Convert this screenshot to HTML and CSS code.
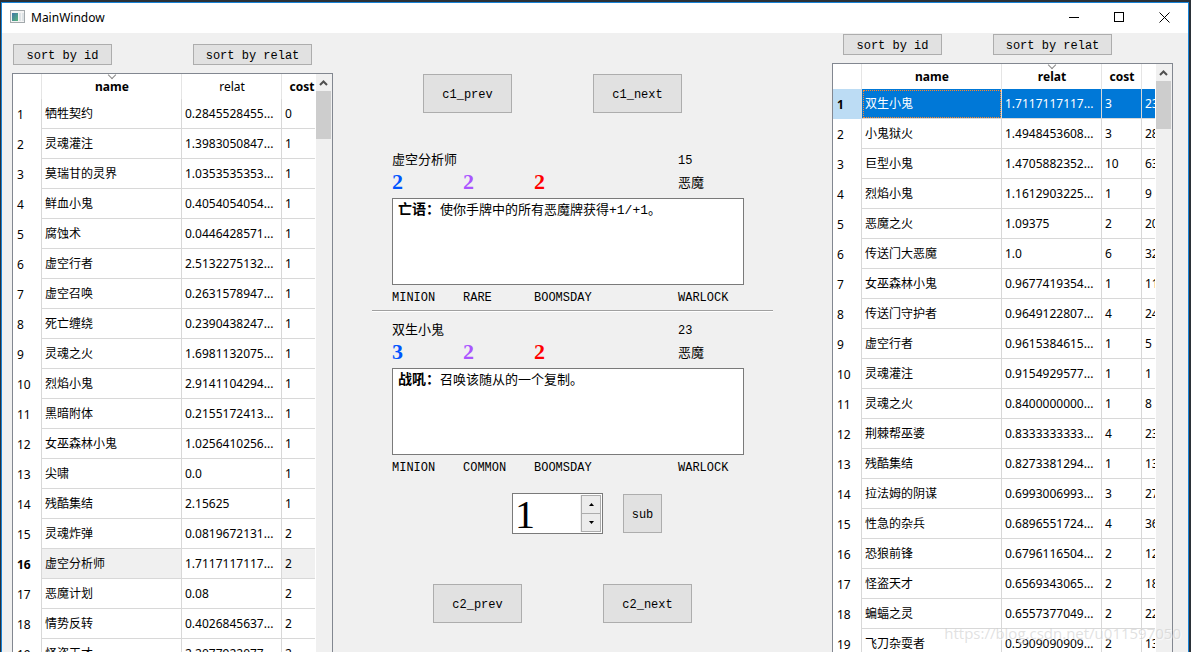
FILE: index.html
```html
<!DOCTYPE html>
<html lang="zh-CN">
<head>
  <meta charset="UTF-8">
  <meta name="viewport" content="width=device-width, initial-scale=1.0">
  <title>MainWindow</title>
  <link rel="stylesheet" href="styles.css">
</head>
<body>
  <div class="window">
    <header class="titlebar">
      <svg class="app-icon" width="16" height="14" viewBox="0 0 16 14">
        <defs>
          <linearGradient id="pane" x1="0" y1="0" x2="1" y2="1">
            <stop offset="0" stop-color="#3f76a8"/>
            <stop offset="1" stop-color="#58b57c"/>
          </linearGradient>
        </defs>
        <rect x="0.5" y="0.5" width="14" height="12" fill="#f4f4f4" stroke="#a3a9ac"/>
        <rect x="2" y="3" width="6" height="8" fill="url(#pane)"/>
        <rect x="9" y="3" width="2" height="8" fill="#dde3e6"/>
        <rect x="12" y="3" width="2" height="8" fill="#dde3e6"/>
      </svg>
      <h1 class="title">MainWindow</h1>
      <div class="controls">
        <button class="ctrl" aria-label="Minimize"><svg width="11" height="11"><path d="M0 5.5H10"/></svg></button>
        <button class="ctrl" aria-label="Maximize"><svg width="11" height="11"><rect x="0.5" y="0.5" width="9" height="9"/></svg></button>
        <button class="ctrl" aria-label="Close"><svg width="11" height="11"><path d="M0.5 0.5L10.5 10.5M10.5 0.5L0.5 10.5"/></svg></button>
      </div>
    </header>

    <main class="content">
      <section class="side side-left">
        <div class="sort-bar">
          <button class="btn btn-id">sort by id</button>
          <button class="btn btn-relat">sort by relat</button>
        </div>
        <div class="table-view">
          <div class="viewport">
            <table>
              <colgroup><col class="c-head"><col class="c-name"><col class="c-relat"><col class="c-cost"></colgroup>
              <thead>
                <tr><th></th><th class="sorted">name</th><th class="plain">relat</th><th>cost</th></tr>
              </thead>
              <tbody>
                <tr><th>1</th><td>牺牲契约</td><td>0.2845528455...</td><td>0</td></tr>
                <tr><th>2</th><td>灵魂灌注</td><td>1.3983050847...</td><td>1</td></tr>
                <tr><th>3</th><td>莫瑞甘的灵界</td><td>1.0353535353...</td><td>1</td></tr>
                <tr><th>4</th><td>鲜血小鬼</td><td>0.4054054054...</td><td>1</td></tr>
                <tr><th>5</th><td>腐蚀术</td><td>0.0446428571...</td><td>1</td></tr>
                <tr><th>6</th><td>虚空行者</td><td>2.5132275132...</td><td>1</td></tr>
                <tr><th>7</th><td>虚空召唤</td><td>0.2631578947...</td><td>1</td></tr>
                <tr><th>8</th><td>死亡缠绕</td><td>0.2390438247...</td><td>1</td></tr>
                <tr><th>9</th><td>灵魂之火</td><td>1.6981132075...</td><td>1</td></tr>
                <tr><th>10</th><td>烈焰小鬼</td><td>2.9141104294...</td><td>1</td></tr>
                <tr><th>11</th><td>黑暗附体</td><td>0.2155172413...</td><td>1</td></tr>
                <tr><th>12</th><td>女巫森林小鬼</td><td>1.0256410256...</td><td>1</td></tr>
                <tr><th>13</th><td>尖啸</td><td>0.0</td><td>1</td></tr>
                <tr><th>14</th><td>残酷集结</td><td>2.15625</td><td>1</td></tr>
                <tr><th>15</th><td>灵魂炸弹</td><td>0.0819672131...</td><td>2</td></tr>
                <tr class="current"><th>16</th><td>虚空分析师</td><td class="focus">1.7117117117...</td><td>2</td></tr>
                <tr><th>17</th><td>恶魔计划</td><td>0.08</td><td>2</td></tr>
                <tr><th>18</th><td>情势反转</td><td>0.4026845637...</td><td>2</td></tr>
                <tr><th>19</th><td>怪盗天才</td><td>2.2077922077...</td><td>2</td></tr>
              </tbody>
            </table>
          </div>
          <div class="scrollbar">
            <svg width="15" height="17"><path d="M4 11L7.500 7.500L11 11"/></svg>
            <div class="thumb"></div>
          </div>
        </div>
      </section>

      <section class="center">
        <div class="pair">
          <button class="btn btn-nav">c1_prev</button>
          <button class="btn btn-nav">c1_next</button>
        </div>

        <article class="card">
          <div class="row row-name">
            <span class="wide">虚空分析师</span><span class="latin">15</span>
          </div>
          <div class="row row-stats">
            <span class="stat cost">2</span><span class="stat attack">2</span><span class="stat health">2</span><span class="race">恶魔</span>
          </div>
          <div class="text"><b>亡语：</b>使你手牌中的所有恶魔牌获得+1/+1。</div>
          <div class="row row-tags">
            <span>MINION</span><span>RARE</span><span>BOOMSDAY</span><span>WARLOCK</span>
          </div>
        </article>
        <hr class="line">
        <article class="card">
          <div class="row row-name">
            <span class="wide">双生小鬼</span><span class="latin">23</span>
          </div>
          <div class="row row-stats">
            <span class="stat cost">3</span><span class="stat attack">2</span><span class="stat health">2</span><span class="race">恶魔</span>
          </div>
          <div class="text"><b>战吼：</b>召唤该随从的一个复制。</div>
          <div class="row row-tags">
            <span>MINION</span><span>COMMON</span><span>BOOMSDAY</span><span>WARLOCK</span>
          </div>
        </article>

        <div class="submit">
          <div class="spin">
            <input type="number" id="count" value="1" aria-label="count">
            <div class="steps">
              <button class="step" aria-label="up"><svg width="5" height="3"><path d="M0 3L2.500 0L5 3Z"/></svg></button>
              <button class="step" aria-label="down"><svg width="5" height="3"><path d="M0 0L2.500 3L5 0Z"/></svg></button>
            </div>
          </div>
          <button class="btn btn-sub">sub</button>
        </div>

        <div class="pair pair-bottom">
          <button class="btn btn-nav">c2_prev</button>
          <button class="btn btn-nav">c2_next</button>
        </div>
      </section>

      <section class="side side-right">
        <div class="sort-bar">
          <button class="btn btn-id">sort by id</button>
          <button class="btn btn-relat">sort by relat</button>
        </div>
        <div class="table-view">
          <div class="viewport">
            <table>
              <colgroup><col class="c-head"><col class="c-name"><col class="c-relat"><col class="c-cost"><col class="c-cost"></colgroup>
              <thead>
                <tr><th></th><th>name</th><th class="sorted">relat</th><th>cost</th><th></th></tr>
              </thead>
              <tbody>
                <tr class="selected"><th>1</th><td class="focus">双生小鬼</td><td>1.7117117117...</td><td>3</td><td>23</td></tr>
                <tr><th>2</th><td>小鬼狱火</td><td>1.4948453608...</td><td>3</td><td>28</td></tr>
                <tr><th>3</th><td>巨型小鬼</td><td>1.4705882352...</td><td>10</td><td>63</td></tr>
                <tr><th>4</th><td>烈焰小鬼</td><td>1.1612903225...</td><td>1</td><td>9</td></tr>
                <tr><th>5</th><td>恶魔之火</td><td>1.09375</td><td>2</td><td>20</td></tr>
                <tr><th>6</th><td>传送门大恶魔</td><td>1.0</td><td>6</td><td>32</td></tr>
                <tr><th>7</th><td>女巫森林小鬼</td><td>0.9677419354...</td><td>1</td><td>11</td></tr>
                <tr><th>8</th><td>传送门守护者</td><td>0.9649122807...</td><td>4</td><td>24</td></tr>
                <tr><th>9</th><td>虚空行者</td><td>0.9615384615...</td><td>1</td><td>5</td></tr>
                <tr><th>10</th><td>灵魂灌注</td><td>0.9154929577...</td><td>1</td><td>1</td></tr>
                <tr><th>11</th><td>灵魂之火</td><td>0.8400000000...</td><td>1</td><td>8</td></tr>
                <tr><th>12</th><td>荆棘帮巫婆</td><td>0.8333333333...</td><td>4</td><td>23</td></tr>
                <tr><th>13</th><td>残酷集结</td><td>0.8273381294...</td><td>1</td><td>13</td></tr>
                <tr><th>14</th><td>拉法姆的阴谋</td><td>0.6993006993...</td><td>3</td><td>27</td></tr>
                <tr><th>15</th><td>性急的杂兵</td><td>0.6896551724...</td><td>4</td><td>36</td></tr>
                <tr><th>16</th><td>恐狼前锋</td><td>0.6796116504...</td><td>2</td><td>12</td></tr>
                <tr><th>17</th><td>怪盗天才</td><td>0.6569343065...</td><td>2</td><td>18</td></tr>
                <tr><th>18</th><td>蝙蝠之灵</td><td>0.6557377049...</td><td>2</td><td>22</td></tr>
                <tr><th>19</th><td>飞刀杂耍者</td><td>0.5909090909...</td><td>2</td><td>13</td></tr>
              </tbody>
            </table>
          </div>
          <div class="scrollbar">
            <svg width="15" height="17"><path d="M4 11L7.500 7.500L11 11"/></svg>
            <div class="thumb"></div>
          </div>
        </div>
      </section>
    </main>
  </div>
  <div class="watermark">https://blog.csdn.net/u011597050</div>
</body>
</html>
```

FILE: styles.css
```css
* {
  box-sizing: border-box;
}

body {
  margin: 0;
  padding: 2px 2px 0 1px;
  height: 100vh;
  overflow: hidden;
  background: #2b3138;
  color: #000;
  font-family: "Noto Sans", "Noto Sans CJK SC", sans-serif;
  font-size: 12px;
}

.window {
  display: flex;
  flex-direction: column;
  height: 100%;
  background: #f0f0f0;
  border: 1px solid #1883d7;
  border-bottom: none;
}

/* title bar */
.titlebar {
  display: flex;
  align-items: center;
  height: 30px;
  padding: 0 1px 2px 8px;
  background: #fff;
  flex: none;
}

.title {
  flex: 1;
  margin: 0 0 0 5px;
  font-size: 12px;
  font-weight: normal;
}

.controls {
  display: flex;
}

.ctrl {
  display: flex;
  align-items: center;
  justify-content: center;
  width: 45px;
  height: 28px;
  padding: 0;
  border: none;
  background: none;
}

.ctrl svg {
  fill: none;
  stroke: #000;
}

/* layout */
.content {
  flex: 1;
  min-height: 0;
  display: grid;
  grid-template-columns: 321px 1fr 341px;
  padding: 0 15px 0 10px;
}

.side {
  display: flex;
  flex-direction: column;
  min-height: 0;
}

.side-left {
  padding-top: 11px;
}

.side-right {
  padding-top: 1px;
}

.sort-bar {
  display: flex;
  margin-bottom: 8px;
}

.side-left .sort-bar {
  gap: 81px;
  padding-left: 1px;
}

.side-right .sort-bar {
  gap: 51px;
  padding-left: 11px;
}

.btn {
  padding: 2px 0 0;
  background: #e1e1e1;
  border: 1px solid #adadad;
  color: #000;
  font-family: "Liberation Mono", "Noto Sans CJK SC", monospace;
  font-size: 12px;
}

.btn-id {
  width: 99px;
  height: 21px;
}

.btn-relat {
  width: 119px;
  height: 21px;
}

.btn-nav {
  width: 89px;
  height: 39px;
}

.btn-sub {
  width: 39px;
  height: 39px;
}

/* tables */
.table-view {
  flex: 1;
  min-height: 0;
  display: flex;
  background: #fff;
  border: 1px solid #828790;
  border-bottom: none;
}

.viewport {
  flex: 1;
  min-width: 0;
  margin-right: 1px;
  overflow: hidden;
}

table {
  width: 0;
  table-layout: fixed;
  border-collapse: separate;
  border-spacing: 0;
  white-space: nowrap;
}

.c-head {
  width: 29px;
}

.c-name {
  width: 140px;
}

.c-relat {
  width: 100px;
}

.c-cost {
  width: 40px;
}

thead th {
  position: relative;
  height: 25px;
  padding: 1px 0 0 1px;
  border-right: 1px solid #e5e5e5;
  line-height: 18px;
}

thead .plain {
  font-weight: normal;
}

.sorted::before {
  content: "";
  position: absolute;
  top: -2px;
  left: 50%;
  width: 5px;
  height: 5px;
  margin-left: -3px;
  border: solid #8a8a8a;
  border-width: 0 1px 1px 0;
  transform: rotate(45deg);
}

tbody th {
  height: 30px;
  padding: 2px 0 0 4px;
  border-right: 1px solid #d8d8d8;
  text-align: left;
  font-weight: normal;
  line-height: 18px;
}

td {
  height: 30px;
  padding: 0 0 0 3px;
  border-right: 1px solid #d8d8d8;
  border-bottom: 1px solid #d8d8d8;
  line-height: 18px;
  overflow: hidden;
}

.current th,
.selected th {
  font-weight: bold;
}

.current td {
  background: #f0f0f0;
}

.current .focus {
  background: #fff;
}

.selected th {
  background: #bcdcf4;
}

.selected td {
  background: #0078d7;
  color: #fff;
}

.selected .focus {
  outline: 1px dotted #ff8728;
  outline-offset: -2px;
}

.scrollbar {
  width: 16px;
  background: #f0f0f0;
}

.scrollbar svg {
  display: block;
  fill: none;
  stroke: #505050;
  stroke-width: 2;
}

.thumb {
  width: 15px;
  height: 48px;
  background: #cdcdcd;
}

/* cards */
.center {
  padding: 41px 59px 0 39px;
}

.pair {
  display: flex;
  gap: 81px;
  padding-left: 51px;
  margin-bottom: 36px;
}

.pair-bottom {
  padding-left: 61px;
  margin: 50px 0 0;
}

.card {
  padding: 0 29px 0 20px;
  font-family: "Liberation Mono", "Noto Sans CJK SC", monospace;
  font-size: 13px;
}

.row {
  display: grid;
  grid-template-columns: 71px 71px 1fr 66px;
  align-items: center;
}

.row-name {
  height: 20px;
}

.row-stats {
  height: 26px;
  margin-bottom: 3px;
}

.row-tags {
  height: 24px;
  padding-top: 2px;
  font-size: 12px;
}

.wide {
  grid-column: span 3;
}

.wide,
.race {
  padding-bottom: 2px;
}

.latin {
  padding-top: 2px;
  font-size: 12px;
}

.stat {
  font-family: "Liberation Serif", serif;
  font-size: 22px;
  font-weight: bold;
  line-height: 26px;
}

.cost {
  color: #0055ff;
}

.attack {
  color: #aa55ff;
}

.health {
  color: #ff0000;
}

.text {
  height: 87px;
  padding: 1px 5px;
  background: #fff;
  border: 1px solid #7a7a7a;
  line-height: 20px;
}

.text b {
  font-size: 14px;
}

.line {
  height: 2px;
  margin: 1px 0 7px;
  border: none;
  border-top: 1px solid #a0a0a0;
  background: #fff;
}

/* spin box */
.submit {
  display: flex;
  align-items: center;
  gap: 20px;
  padding-left: 140px;
  margin-top: 14px;
}

.spin {
  display: flex;
  width: 91px;
  height: 41px;
  padding: 1px;
  background: #fff;
  border: 1px solid #7a7a7a;
}

.spin input {
  flex: 1;
  min-width: 0;
  padding: 2px 0 0 1px;
  border: none;
  outline: none;
  background: none;
  font-family: "Liberation Serif", serif;
  font-size: 40px;
  appearance: textfield;
  -moz-appearance: textfield;
}

.spin input::-webkit-inner-spin-button {
  appearance: none;
  -webkit-appearance: none;
}

.steps {
  display: flex;
  flex-direction: column;
  width: 21px;
  background: #f0f0f0;
  border-left: 1px solid #f0f0f0;
}

.step {
  display: flex;
  flex: 1;
  align-items: center;
  justify-content: center;
  padding: 0;
  background: #ececec;
  border: 1px solid #acacac;
}

.step + .step {
  border-top: none;
}

.watermark {
  position: absolute;
  right: 10px;
  bottom: 9px;
  color: rgba(205, 205, 205, 0.6);
  font-family: "Open Sans", sans-serif;
  font-size: 15px;
  line-height: 20px;
  text-shadow: 1px 1px 1px rgba(255, 255, 255, 0.7);
}
```
